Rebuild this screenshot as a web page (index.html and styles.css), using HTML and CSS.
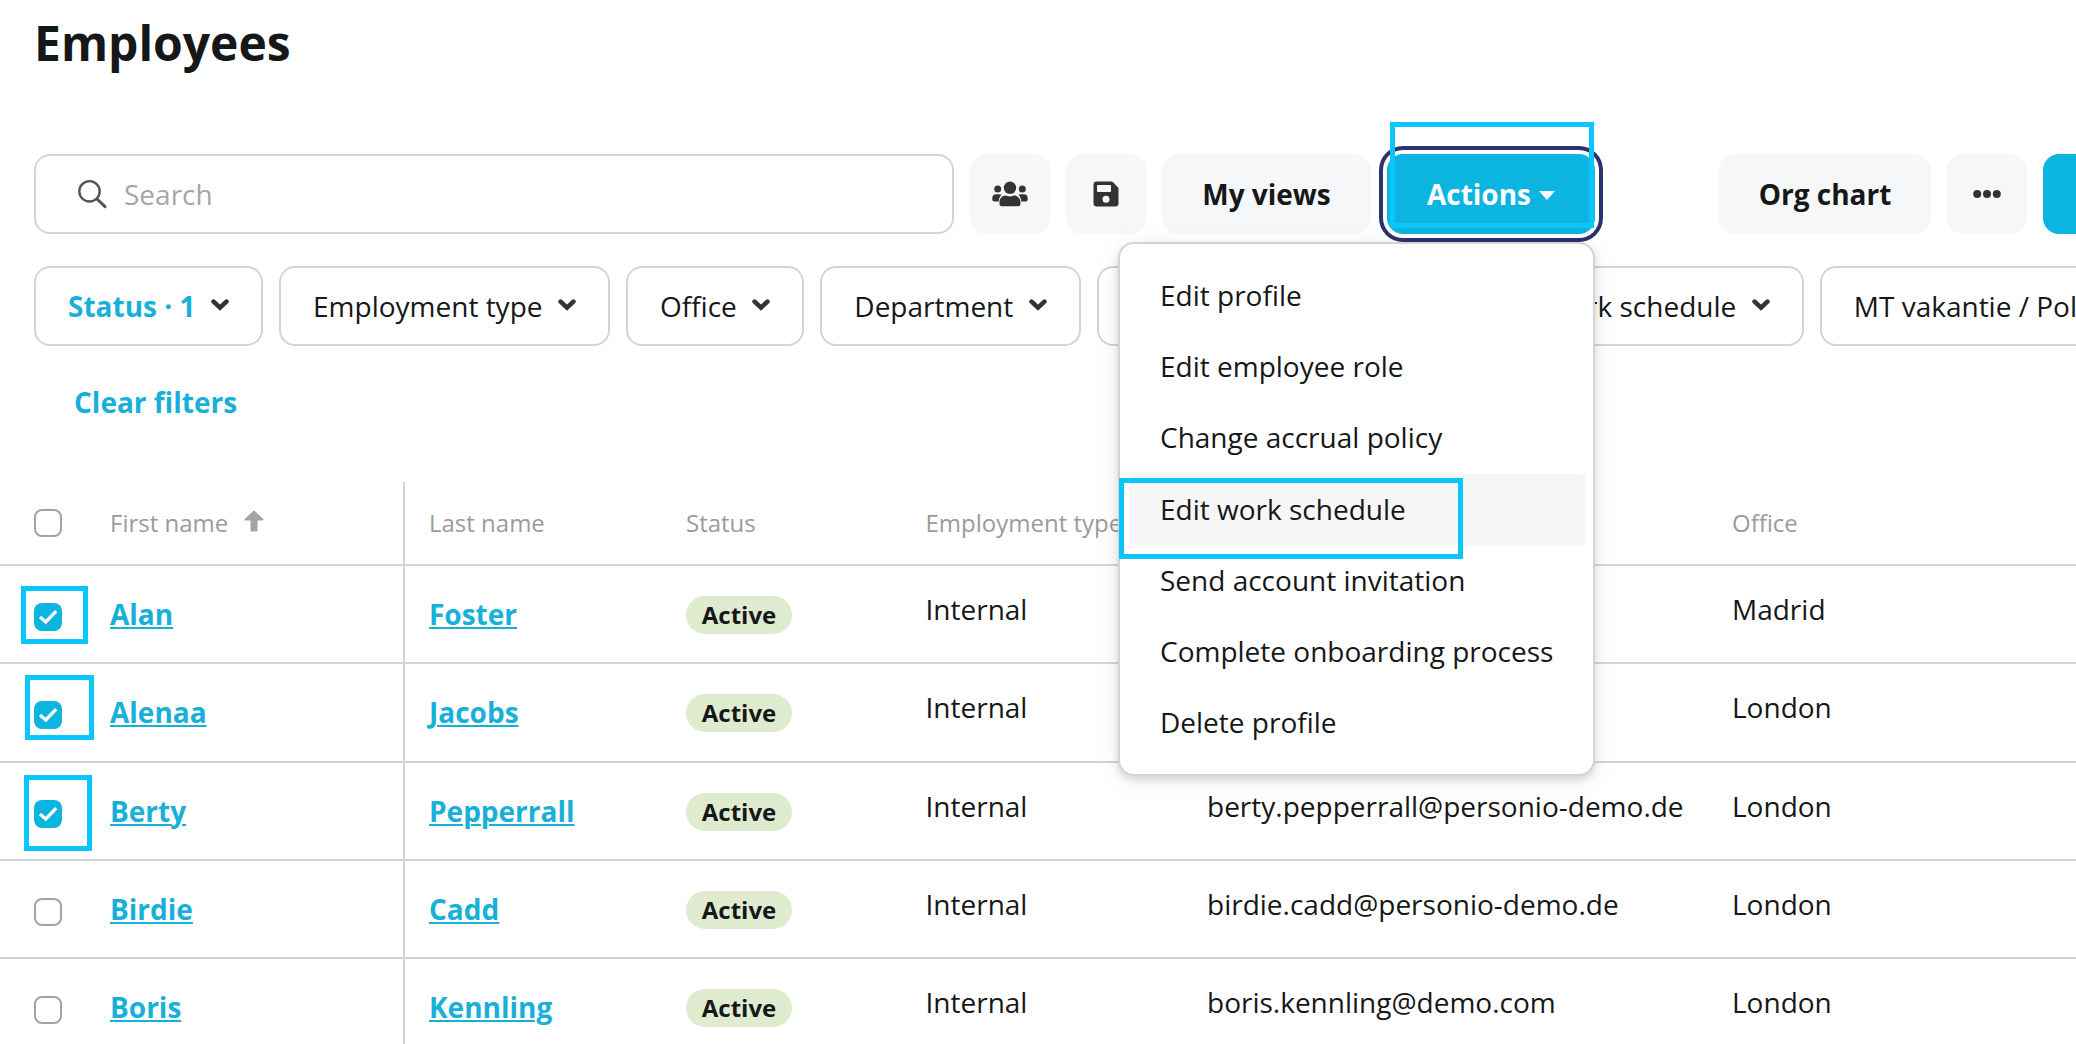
FILE: index.html
```html
<!DOCTYPE html>
<html lang="en">
<head>
  <meta charset="UTF-8" />
  <meta name="viewport" content="width=device-width, initial-scale=1.0" />
  <title>Employees</title>
  <link rel="stylesheet" href="styles.css">
</head>
<body>

<svg class="sprite" aria-hidden="true">
  <symbol id="chevron" viewBox="0 0 18 12">
    <path d="M2.6 2.6 L9 8.6 L15.4 2.6" fill="none" stroke="currentColor" stroke-width="4.6" stroke-linecap="round" />
  </symbol>
  <symbol id="check" viewBox="0 0 28 28">
    <path d="M6 14 L11.8 19 L22.2 8.2" fill="none" stroke="currentColor" stroke-width="3.3" />
  </symbol>
</svg>

<h1>Employees</h1>

<div class="toolbar">
  <label class="search">
    <svg width="30" height="30" viewBox="0 0 30 30" fill="none" stroke="#555" stroke-width="2.4" stroke-linecap="round">
      <circle cx="12.5" cy="12.3" r="10.2" />
      <path d="M20 20 L28 27.7" stroke-width="3" />
    </svg>
    <span>Search</span>
  </label>
  <button class="btn icon">
    <svg width="36" height="26" viewBox="0 0 36 26" fill="#333">
      <circle cx="18" cy="6.8" r="6.2" />
      <circle cx="5.7" cy="7.9" r="3.5" />
      <circle cx="30.3" cy="7.9" r="3.5" />
      <path d="M.3 18.5v-1.5c0-2.2 1.6-3.8 3.8-3.8h3c1 0 1.8.2 2.5.5-1.6 1.5-2.6 3.600-2.900 6.800H2.300c-1.200 0-2-.8-2-2z" />
      <path d="M35.700 18.500v-1.500c0-2.200-1.600-3.800-3.800-3.800h-3c-1 0-1.800.2-2.500.5 1.600 1.500 2.600 3.600 2.900 6.800h4.400c1.200 0 2-.8 2-2z" />
      <path d="M7.500 23v-1.700c0-3.800 2.800-6.700 6.400-6.700.9 0 1.900.9 4.100.9s3.200-.9 4.100-.9c3.600 0 6.400 2.900 6.400 6.700V23c0 1.300-1 2.300-2.300 2.300H9.800C8.500 25.300 7.500 24.300 7.500 23z" />
    </svg>
  </button>
  <button class="btn icon">
    <svg width="26" height="26" viewBox="0 0 26 26">
      <path d="M3.500.5h14.700c.7 0 1.300.3 1.800.8l4.700 4.700c.5.500.8 1.100.8 1.800v14.700c0 1.700-1.300 3-3 3h-19c-1.700 0-3-1.300-3-3v-19c0-1.700 1.300-3 3-3z" fill="#333" />
      <rect x="4" y="4" width="14" height="7" rx="1" fill="#f6f7f9" />
      <circle cx="13" cy="18.200" r="3.500" fill="#f6f7f9" />
    </svg>
  </button>
  <button class="btn views">My views</button>
  <div class="actions">
    <button class="btn primary">Actions <i class="caret"></i></button>
    <div class="menu">
      <div class="item">Edit profile</div>
      <div class="item">Edit employee role</div>
      <div class="item">Change accrual policy</div>
      <div class="item hover">Edit work schedule</div>
      <div class="item">Send account invitation</div>
      <div class="item">Complete onboarding process</div>
      <div class="item">Delete profile</div>
    </div>
  </div>
  <button class="btn org">Org chart</button>
  <button class="btn icon">
    <svg width="28" height="10" viewBox="0 0 28 10" fill="#333">
      <circle cx="4.200" cy="5" r="4" />
      <circle cx="14" cy="5" r="4" />
      <circle cx="23.800" cy="5" r="4" />
    </svg>
  </button>
  <button class="btn primary add"></button>
</div>

<div class="filters">
  <button class="filter on">Status · 1 <svg class="chev"><use href="#chevron" /></svg></button>
  <button class="filter">Employment type <svg class="chev"><use href="#chevron" /></svg></button>
  <button class="filter">Office <svg class="chev"><use href="#chevron" /></svg></button>
  <button class="filter">Department <svg class="chev"><use href="#chevron" /></svg></button>
  <div class="tucked"><button class="filter wide"></button><button class="filter">Work schedule <svg class="chev"><use href="#chevron" /></svg></button></div>
  <button class="filter">MT vakantie / Policy <svg class="chev"><use href="#chevron" /></svg></button>
</div>
<a class="clear">Clear filters</a>

<div class="table">
  <div class="row head">
    <div class="cell check"><span class="box"></span></div>
    <div class="cell first">First name
      <svg width="20" height="22" viewBox="0 0 20 22" fill="#a3a3a3"><path d="M10 .3 L19.300 9 Q19.800 10.300 18.500 10.500 H13.500 V20.500 Q13.500 21.500 12.500 21.500 H7.500 Q6.500 21.500 6.500 20.500 V10.500 H1.500 Q.2 10.300 .7 9 Z" /></svg>
    </div>
    <div class="cell">Last name</div>
    <div class="cell">Status</div>
    <div class="cell">Employment type</div>
    <div class="cell">Email</div>
    <div class="cell">Office</div>
  </div>
  <div class="row">
    <div class="cell check"><span class="box on"><svg><use href="#check" /></svg></span></div>
    <div class="cell first"><a>Alan</a></div>
    <div class="cell"><a>Foster</a></div>
    <div class="cell"><span class="badge">Active</span></div>
    <div class="cell text">Internal</div>
    <div class="cell text"></div>
    <div class="cell text">Madrid</div>
  </div>
  <div class="row">
    <div class="cell check"><span class="box on"><svg><use href="#check" /></svg></span></div>
    <div class="cell first"><a>Alenaa</a></div>
    <div class="cell"><a>Jacobs</a></div>
    <div class="cell"><span class="badge">Active</span></div>
    <div class="cell text">Internal</div>
    <div class="cell text"></div>
    <div class="cell text">London</div>
  </div>
  <div class="row">
    <div class="cell check"><span class="box on"><svg><use href="#check" /></svg></span></div>
    <div class="cell first"><a>Berty</a></div>
    <div class="cell"><a>Pepperrall</a></div>
    <div class="cell"><span class="badge">Active</span></div>
    <div class="cell text">Internal</div>
    <div class="cell text">berty.pepperrall@personio-demo.de</div>
    <div class="cell text">London</div>
  </div>
  <div class="row">
    <div class="cell check"><span class="box"></span></div>
    <div class="cell first"><a>Birdie</a></div>
    <div class="cell"><a>Cadd</a></div>
    <div class="cell"><span class="badge">Active</span></div>
    <div class="cell text">Internal</div>
    <div class="cell text">birdie.cadd@personio-demo.de</div>
    <div class="cell text">London</div>
  </div>
  <div class="row">
    <div class="cell check"><span class="box"></span></div>
    <div class="cell first"><a>Boris</a></div>
    <div class="cell"><a>Kennling</a></div>
    <div class="cell"><span class="badge">Active</span></div>
    <div class="cell text">Internal</div>
    <div class="cell text">boris.kennling@demo.com</div>
    <div class="cell text">London</div>
  </div>
</div>

<!-- tutorial highlights -->
<div class="mark mark-actions"></div>
<div class="mark mark-menu"></div>
<div class="mark mark-alan"></div>
<div class="mark mark-alenaa"></div>
<div class="mark mark-berty"></div>

</body>
</html>
```
FILE: styles.css
```css
* {
  box-sizing: border-box;
}

html, body {
  margin: 0;
  padding: 0;
  height: 1044px;
  overflow: hidden;
  background: #fff;
  color: #161718;
  font-family: "Open Sans", "Noto Sans", sans-serif;
  font-size: 28px;
}

body {
  position: relative;
}

.sprite {
  display: none;
}

h1 {
  margin: 0;
  padding: 10px 0 0 34px;
  height: 154px;
  font-size: 48px;
  line-height: 66px;
}

button {
  font: inherit;
  color: inherit;
  white-space: nowrap;
}

/* toolbar */
.toolbar {
  display: flex;
  gap: 16px;
  height: 80px;
  padding-left: 34px;
}

.search {
  display: flex;
  flex-shrink: 0;
  align-items: center;
  gap: 17px;
  width: 920px;
  padding-left: 41px;
  border: 2px solid #d4d4d4;
  border-radius: 16px;
  color: #a6a6a6;
}

.btn {
  display: flex;
  flex-shrink: 0;
  align-items: center;
  justify-content: center;
  height: 80px;
  padding: 0;
  border: none;
  border-radius: 16px;
  background: #f6f7f9;
  font-weight: bold;
}

.icon {
  width: 80px;
}

.views {
  width: 209px;
}

.org {
  width: 212px;
}

.primary {
  width: 208px;
  background: #0cb4e0;
  color: #fff;
}

/* runs off the right edge of the window */
.add {
  flex: 1;
  border-radius: 16px 0 0 16px;
}

.actions {
  position: relative;
  flex-shrink: 0;
  margin-right: 108px;
}

.actions .btn {
  box-shadow: 0 0 0 4px #fff, 0 0 0 8px #2b3270;
}

.caret {
  margin: 3px 0 0 8px;
  border: 8px solid transparent;
  border-top: 9px solid #fff;
  border-bottom: 0;
}

.menu {
  position: absolute;
  top: 88px;
  right: 0;
  z-index: 2;
  width: 477px;
  height: 534px;
  padding: 16px 8px 16px 9px;
  border: 2px solid #d4d4d4;
  border-radius: 16px;
  background: #fff;
  box-shadow: 0 4px 8px rgba(0,0,0,0.14), 0 4px 32px rgba(0,0,0,0.06);
}

.item {
  height: 71.2px;
  padding-left: 31px;
  border-radius: 4px;
  line-height: 70px;
}

.item.hover {
  background: #f6f6f7;
}

/* filters */
.filters {
  display: flex;
  gap: 16px;
  overflow: hidden;
  padding: 32px 0 0 34px;
}

.filter {
  display: flex;
  flex-shrink: 0;
  align-items: center;
  height: 80px;
  padding: 0 32px;
  border: 2px solid #d4d4d4;
  border-radius: 16px;
  background: #fff;
}

.filter.on {
  color: #18b0d8;
  font-weight: bold;
}

.chev {
  width: 18px;
  height: 12px;
  margin: 0 0 3px 15.5px;
  color: #333;
}

.tucked {
  display: flex;
  flex-shrink: 0;
  gap: 16px;
  width: 707px;
}

.filter.wide {
  flex: 1;
}

.clear {
  display: block;
  padding-left: 74px;
  height: 136px;
  color: #18b0d8;
  font-weight: bold;
  line-height: 113px;
}

/* table */
.row {
  display: grid;
  grid-template-columns: 110px 295px 281px 239.5px 281.5px 525px 344px;
  height: 98.25px;
  border-bottom: 2px solid #d4d4d4;
}

.cell {
  padding-top: 29px;
  line-height: 38px;
  white-space: nowrap;
}

.first {
  border-right: 2px solid #d4d4d4;
}

.first + .cell {
  padding-left: 24px;
}

.head {
  height: 84px;
  color: #9b9b9b;
  font-size: 24px;
}

.head .cell {
  padding-top: 22px;
}

.head svg {
  margin-left: 10px;
}

.row .check {
  padding: 37px 0 0 34px;
}

.head .check {
  padding-top: 27px;
}

.box {
  display: block;
  width: 28px;
  height: 28px;
  border: 2px solid #a3a3a3;
  border-radius: 8px;
}

.box.on {
  border: none;
  background: #0cb4e0;
  color: #fff;
}

.box svg {
  display: block;
  width: 28px;
  height: 28px;
}

.cell a {
  color: #18b0d8;
  font-weight: bold;
  text-decoration: underline;
  text-decoration-thickness: 2px;
  text-underline-offset: 2px;
}

.badge {
  display: block;
  width: 106px;
  height: 38px;
  margin-top: 1px;
  border-radius: 19px;
  background: #deebcf;
  font-size: 24px;
  font-weight: bold;
  line-height: 38px;
  text-align: center;
}

.row .text {
  padding-top: 24px;
}

/* highlight frames */
.mark {
  position: absolute;
  z-index: 3;
  border: 5px solid #0ac6fa;
}

.mark-actions {
  left: 1390px;
  top: 122px;
  width: 204px;
  height: 106px;
}

.mark-menu {
  left: 1119px;
  top: 478px;
  width: 344px;
  height: 81px;
}

.mark-alan {
  left: 21px;
  top: 586px;
  width: 67px;
  height: 58px;
}

.mark-alenaa {
  left: 25px;
  top: 675px;
  width: 69px;
  height: 65px;
}

.mark-berty {
  left: 24px;
  top: 775px;
  width: 68px;
  height: 76px;
}
```
